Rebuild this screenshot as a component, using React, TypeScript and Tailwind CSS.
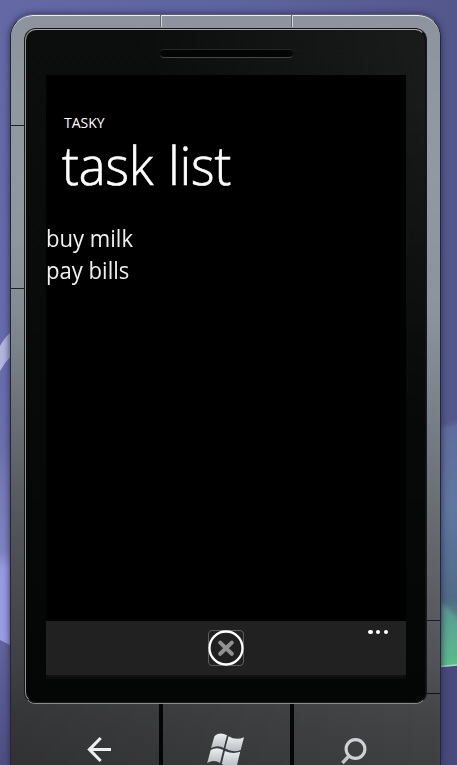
import React from "react";

const tasks = ["buy milk", "pay bills"];

function Wallpaper() {
  return (
    <svg className="absolute inset-0 h-full w-full" viewBox="0 0 457 765" preserveAspectRatio="none">
      <defs>
        <linearGradient id="top" x1="0" x2="1">
          <stop offset="0" stopColor="#6469a6" />
          <stop offset="0.5" stopColor="#5e649f" />
          <stop offset="1" stopColor="#54578b" />
        </linearGradient>
        <linearGradient id="left" x1="0" x2="0" y1="0" y2="1">
          <stop offset="0" stopColor="#6468a5" />
          <stop offset="0.45" stopColor="#676bae" />
          <stop offset="0.67" stopColor="#6b70ae" />
          <stop offset="0.72" stopColor="#7578b4" />
          <stop offset="0.84" stopColor="#7f83c2" />
          <stop offset="0.87" stopColor="#979be4" />
          <stop offset="1" stopColor="#9a9ee6" />
        </linearGradient>
        <linearGradient id="leftLow" x1="0" x2="0" y1="0" y2="1">
          <stop offset="0" stopColor="#62649d" />
          <stop offset="1" stopColor="#4c4e84" />
        </linearGradient>
        <linearGradient id="right" x1="0" x2="0" y1="0" y2="1">
          <stop offset="0" stopColor="#5e6c9c" />
          <stop offset="0.35" stopColor="#60779e" />
          <stop offset="0.72" stopColor="#516b86" />
          <stop offset="0.86" stopColor="#559a89" />
          <stop offset="1" stopColor="#5cc58a" />
        </linearGradient>
        <filter id="soft" x="-50%" y="-10%" width="200%" height="120%">
          <feGaussianBlur stdDeviation="2" />
        </filter>
      </defs>
      <rect width="457" height="765" fill="url(#top)" />
      <rect y="30" width="12" height="620" fill="url(#left)" />
      <path d="M0 640L12 646V765H0Z" fill="url(#leftLow)" />
      <path d="M0 346Q4 338 12 331V355Q5 362 0 371Z" fill="#b2b5dc" />
      <path d="M438 428L465 421V668H438Z" fill="url(#right)" filter="url(#soft)" />
      <path d="M440 603Q450 608 460 622V650L440 658Z" fill="#62b796" opacity="0.55" filter="url(#soft)" />
      <path d="M440 667L457 665V765H440Z" fill="#484a7c" />
      <path d="M440 666.5L457 665" stroke="#a5dfca" strokeWidth="1.5" />
    </svg>
  );
}

function Seams() {
  return (
    <>
      <i className="absolute left-[150px] top-0 h-3 w-px bg-[#d4d4d7] shadow-[-1px_0_0_#63666b]" />
      <i className="absolute left-[281px] top-0 h-3 w-px bg-[#d4d4d7] shadow-[-1px_0_0_#63666b]" />
      <i className="absolute left-0 top-[110px] h-px w-[13px] bg-[#1e2225]" />
      <i className="absolute left-0 top-[273px] h-px w-[13px] bg-[#1e2225]" />
      <i className="absolute right-0 top-[605px] h-px w-[13px] bg-[#1b1d1f]" />
      <i className="absolute right-0 top-[678px] h-px w-[13px] bg-[#111]" />
    </>
  );
}

function CloseButton() {
  return (
    <button className="flex size-9 items-center justify-center rounded-[4px] border border-[#5c5c5c]">
      <svg className="size-9 shrink-0" viewBox="0 0 36 36" fill="none">
        <circle cx="18" cy="18" r="16.5" fill="#202020" stroke="#fff" strokeWidth="2.3" />
        <path d="M12.2 12.6L23.8 23.8M23.8 12.6L12.2 23.8" stroke="#929292" strokeWidth="4" strokeLinecap="round" />
      </svg>
    </button>
  );
}

function Screen() {
  return (
    <div className="flex h-[600px] flex-col bg-black font-['Open_Sans','Noto_Sans',sans-serif] text-white">
      <header className="h-[144px] pt-[38px] whitespace-nowrap">
        <p className="ml-[18px] w-max text-[14px] leading-5">TASKY</p>
        <h1 className="ml-[16px] mt-[-1px] w-max origin-left scale-x-[0.95] text-[53px] font-light leading-[66px] [-webkit-text-stroke:0.7px_white] [word-spacing:2px]">
          task list
        </h1>
      </header>
      <ul className="flex-1 pt-[3px]">
        {tasks.map((task) => (
          <li
            key={task}
            className="h-8 w-max origin-left scale-x-[0.96] whitespace-nowrap text-[23px] font-normal leading-8 text-[#f0f0f0]"
          >
            {task}
          </li>
        ))}
      </ul>
      <footer className="grid h-[54px] shrink-0 grid-cols-3 bg-[#212121]">
        <span />
        <div className="flex items-center justify-center">
          <CloseButton />
        </div>
        <div className="flex justify-end gap-[3.5px] pr-[18px] pt-[9px]">
          <i className="size-[4.2px] rounded-full bg-white" />
          <i className="size-[4.2px] rounded-full bg-white" />
          <i className="size-[4.2px] rounded-full bg-white" />
        </div>
      </footer>
    </div>
  );
}

function HardwareKeys() {
  return (
    <nav className="relative -mx-[13px] flex h-[61px]">
      <div className="w-[148px] pl-[75px] pt-[32px]">
        <svg className="h-[27px] w-[26px]" viewBox="0 0 26 27" fill="none">
          <path d="M25 13.5H4M14.7 2L3.5 13.5L14.7 25" stroke="#eceeef" strokeWidth="3.2" />
        </svg>
      </div>
      <div className="w-[4px] bg-[#050505]" />
      <div className="w-[127px] pl-[43px] pt-[28px]">
        <svg className="h-[38px] w-[42px]" viewBox="0 0 42 38">
          <defs>
            <linearGradient id="flag" x1="0" y1="0" x2="0" y2="1">
              <stop offset="0" stopColor="#eceeef" />
              <stop offset="1" stopColor="#b8bec4" />
            </linearGradient>
          </defs>
          <g fill="url(#flag)" transform="translate(0 1)">
            <path d="M8.5 3Q14 -1.5 21 2.2L17.7 15Q12 11.5 5 15Z" />
            <path d="M22.5 3.2Q30 7.8 38 4.3L34.7 17Q27 20 19.3 15.6Z" />
            <path d="M4.7 17Q11 13.5 17.2 17L14 30Q8 26 1.2 30Z" />
            <path d="M18.9 17.9Q27 21.5 34.2 18.8L31 32Q24 35 15.7 31Z" />
          </g>
        </svg>
      </div>
      <div className="w-[4px] bg-[#050505]" />
      <div className="flex-1 pl-[46px] pt-[32px]">
        <svg className="h-[29px] w-[28px]" viewBox="0 0 28 29" fill="none">
          <circle cx="15.5" cy="13" r="9.4" stroke="#cfd3d6" strokeWidth="3.1" />
          <path d="M9 20L2.4 27" stroke="#c3c7ca" strokeWidth="3.4" />
        </svg>
      </div>
    </nav>
  );
}

export default function App() {
  return (
    <main className="relative h-[765px] w-[457px] overflow-hidden">
      <Wallpaper />
      <section className="relative ml-[10px] mt-[14px] h-[751px] w-[431px] overflow-hidden rounded-t-[23px] border-x border-t border-x-[#24272d] border-t-[#5d5f72] bg-[linear-gradient(180deg,#8e949d_0%,#9099a1_20%,#8b939b_40%,#747a80_58%,#606368_74%,#505256_87%,#454648_93%,#3f4042_100%)] px-[13px] pt-[13px] shadow-[0_0_7px_#2c2e58]">
        <i className="absolute inset-0 rounded-t-[22px] bg-[linear-gradient(90deg,rgba(0,0,0,.22)_0%,transparent_100%)] [mask-image:linear-gradient(transparent_30%,black_70%)]" />
        <i className="absolute inset-0 rounded-t-[22px] border-t-[1.5px] border-[#eeedf0]" />
        <Seams />
        <div className="relative h-[676px] rounded-[12px] border border-x-[#17191b] border-t-[#111315] border-b-[#898b8c] bg-[linear-gradient(180deg,#0c0e0e,#080a0a_50%,#040505)]">
          <div className="relative h-full rounded-[11px] border border-l-[#929494] border-t-[#aaa8a8] border-r-[#111] border-b-[#1a1a1a] pl-[20px] pr-[19px] pt-[19px]">
            <i className="absolute inset-0 rounded-[10px] bg-[linear-gradient(90deg,rgba(255,255,255,0)_25%,rgba(255,255,255,.06)_100%)] [mask-image:linear-gradient(black_10%,transparent_60%)]" />
            <div className="relative mx-auto h-[9px] w-[133px] rounded-[4px] border-b border-b-[#46494a] border-t border-t-[#252827] bg-[#030404]" />
            <div className="relative mt-[17px] [box-shadow:0_4px_0_-2px_#111,0_4px_0_0_#0c0c0c]">
              <Screen />
            </div>
          </div>
        </div>
        <HardwareKeys />
      </section>
    </main>
  );
}
